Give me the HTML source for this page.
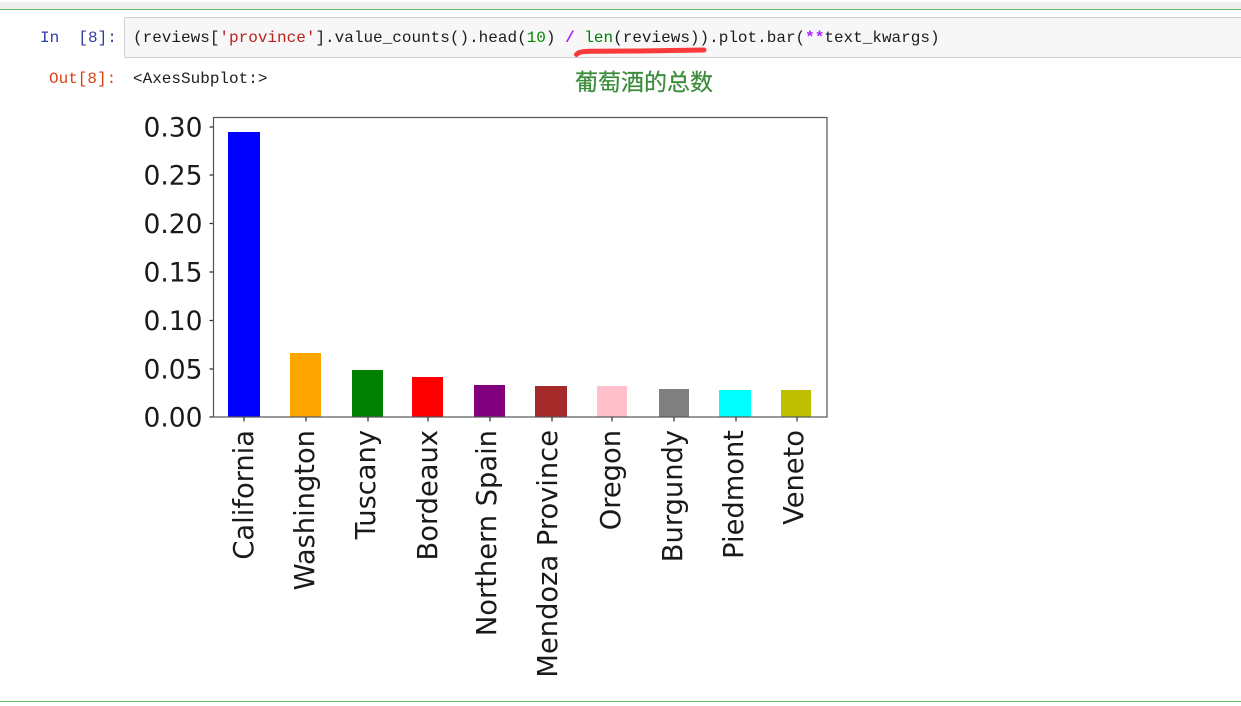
<!DOCTYPE html>
<html>
<head>
<meta charset="utf-8">
<style>
html,body{margin:0;padding:0;background:#fff;}
body{width:1241px;height:706px;position:relative;overflow:hidden;}
.abs{position:absolute;}
.mono{font-family:"Liberation Mono",monospace;font-size:16px;line-height:20px;white-space:pre;color:#1c1c1c;}
</style>
</head>
<body>
<div class="abs" style="left:0;top:2px;width:1241px;height:7px;background:#eeeeee"></div>
<div class="abs" style="left:0;top:9px;width:1241px;height:1px;background:#66bb6a"></div>
<div class="abs" style="left:0;top:701px;width:1241px;height:1px;background:#66bb6a"></div>
<div class="abs" style="left:124px;top:17px;width:1125px;height:39px;background:#f7f7f7;border:1px solid #cfcfcf;border-radius:2px"></div>
<div class="abs mono" style="left:40px;top:28px;color:#303f9f">In  [8]:</div>
<div class="abs mono" style="left:133px;top:28px">(reviews[<span style="color:#ba2121">'province'</span>].value_counts().head(<span style="color:#008800">10</span>) <span style="color:#aa22ff;font-weight:bold">/</span> <span style="color:#008000">len</span>(reviews)).plot.bar(<span style="color:#aa22ff;font-weight:bold">**</span>text_kwargs)</div>
<div class="abs mono" style="left:49px;top:69px;color:#d84315">Out[8]:</div>
<div class="abs mono" style="left:133px;top:69px">&lt;AxesSubplot:&gt;</div>
<div class="abs" style="left:575px;top:68px;font-family:'Liberation Sans','Noto Sans CJK SC',sans-serif;font-size:23px;line-height:28px;color:#3c8c3c;-webkit-text-stroke:0.25px #3c8c3c;white-space:nowrap">葡萄酒的总数</div>
<svg class="abs" style="left:0;top:0" width="1241" height="706" viewBox="0 0 1241 706">
<path d="M576.5 54.5 C579 51.5 584 51.5 592 51.2 L640 51 L704 50" fill="none" stroke="#f83a3a" stroke-width="5" stroke-linecap="round"/>
<g shape-rendering="crispEdges">
<rect x="228" y="132" width="32" height="285" fill="#0000ff"/>
<rect x="290" y="353" width="31" height="64" fill="#ffa500"/>
<rect x="352" y="370" width="31" height="47" fill="#008000"/>
<rect x="412" y="377" width="31" height="40" fill="#ff0000"/>
<rect x="474" y="385" width="31" height="32" fill="#800080"/>
<rect x="535" y="386" width="32" height="31" fill="#a52a2a"/>
<rect x="597" y="386" width="30" height="31" fill="#ffc0cb"/>
<rect x="659" y="389" width="30" height="28" fill="#808080"/>
<rect x="719" y="390" width="32" height="27" fill="#00ffff"/>
<rect x="781" y="390" width="30" height="27" fill="#bfbf00"/>
</g>
<rect x="213.5" y="117.5" width="613.5" height="299.5" fill="none" stroke="#555" stroke-width="1.2"/>
<g stroke="#333" stroke-width="1.2">
<path d="M209.5 127H213M209.5 175H213M209.5 223.5H213M209.5 272H213M209.5 320.5H213M209.5 369H213M209.5 417H213"/>
<path d="M244 417V421.5M306 417V421.5M368 417V421.5M428 417V421.5M490 417V421.5M552 417V421.5M612 417V421.5M674 417V421.5M736 417V421.5M797 417V421.5"/>
</g>
<g font-family="'DejaVu Sans',sans-serif" fill="#1a1a1a" text-anchor="end">
<g font-size="26.5">
<text x="202.500" y="136.500">0.30</text>
<text x="202.500" y="184.500">0.25</text>
<text x="202.500" y="233">0.20</text>
<text x="202.500" y="281.500">0.15</text>
<text x="202.500" y="330">0.10</text>
<text x="202.500" y="378.500">0.05</text>
<text x="202.500" y="426.500">0.00</text>
</g>
<g font-size="27.3">
<text transform="translate(253 430) rotate(-90)">California</text>
<text transform="translate(314 430) rotate(-90)">Washington</text>
<text transform="translate(375 430) rotate(-90)">Tuscany</text>
<text transform="translate(437 430) rotate(-90)">Bordeaux</text>
<text transform="translate(496 430) rotate(-90)">Northern Spain</text>
<text transform="translate(557 430) rotate(-90)">Mendoza Province</text>
<text transform="translate(620 430) rotate(-90)">Oregon</text>
<text transform="translate(682 430) rotate(-90)">Burgundy</text>
<text transform="translate(743 430) rotate(-90)">Piedmont</text>
<text transform="translate(803 430) rotate(-90)">Veneto</text>
</g>
</g>
</svg>
</body>
</html>
